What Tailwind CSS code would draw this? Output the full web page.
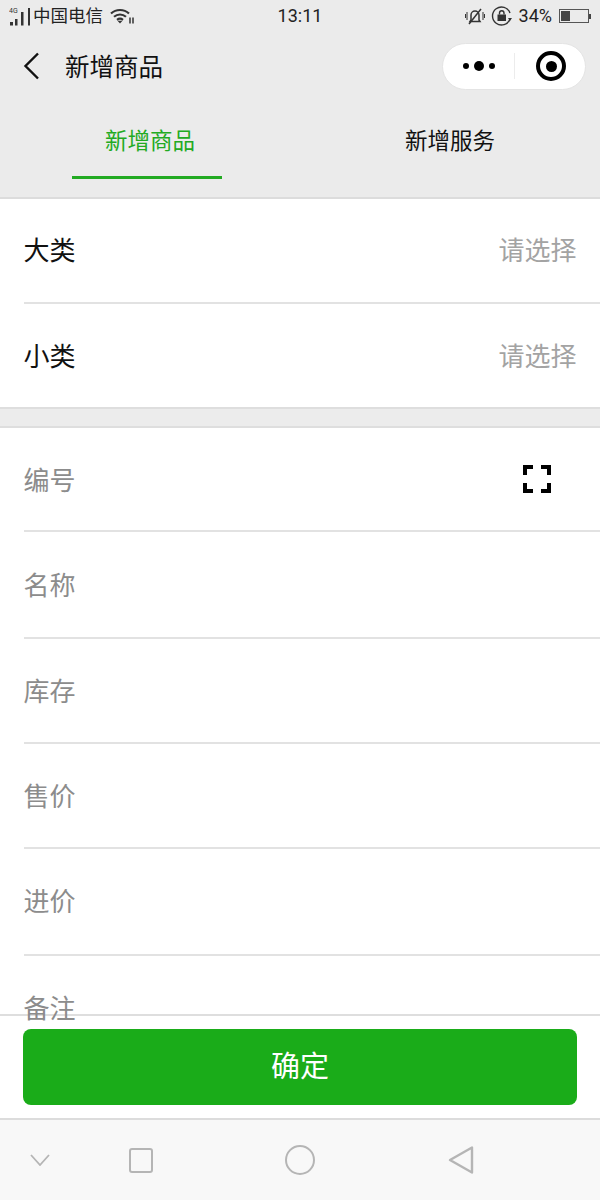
<!DOCTYPE html>
<html lang="zh-CN">
<head>
    <meta charset="UTF-8">
    <meta name="viewport" content="width=device-width, initial-scale=1.0">
    <title>新增商品</title>
    <script src="https://cdn.jsdelivr.net/npm/@tailwindcss/browser@4"></script>
</head>
<body class="w-[600px] h-[1200px] overflow-hidden bg-white font-['Roboto','Noto_Sans_CJK_SC',sans-serif]">
    <div class="flex flex-col h-[1200px]">
        <!-- Header -->
        <div class="bg-[#ebebeb] h-[199px] shrink-0 border-b-2 border-[#dcdcdc]">
            <!-- Status bar -->
            <div class="h-[32px] flex items-center justify-between pl-[9px] pr-[9px] text-[#222]">
                <div class="flex items-center w-[200px]">
                    <svg class="w-[23px] h-[20px] shrink-0" viewBox="0 0 23 20">
                        <text x="0" y="7" font-size="7" font-family="Roboto" fill="#333">4G</text>
                        <rect x="1" y="16" width="3" height="3.500" fill="#333"/>
                        <rect x="6" y="13" width="2.500" height="6.500" fill="#333"/>
                        <rect x="12" y="6" width="2.500" height="13.500" fill="#333"/>
                        <rect x="19" y="2" width="2" height="17.500" fill="#333"/>
                    </svg>
                    <span class="text-[17.500px] ml-[1px] pt-[2px] leading-none">中国电信</span>
                    <svg class="ml-[7px] w-[24px] h-[16px] mt-[-1px]" viewBox="0 0 24 16" fill="none" stroke="#333" stroke-width="2.200">
                        <path d="M1 5.500C6 0.800 14 0.800 19 5.500"/>
                        <path d="M4 8.800C7.500 5.700 12.500 5.700 16 8.800"/>
                        <path d="M7 11.800C8.800 10.500 11.200 10.500 13 11.800"/>
                        <path d="M10 15.500L7.500 12.800H12.500Z" fill="#333" stroke="none"/>
                        <path d="M20 9.500v6M23 9.500v6" stroke-width="1.500"/>
                    </svg>
                </div>
                <span class="text-[18px] leading-none">13:11</span>
                <div class="flex items-center justify-end w-[200px]">
                    <svg class="w-[20px] h-[18px]" viewBox="0 0 20 18" fill="none" stroke="#333" stroke-width="1.500">
                        <path d="M6 13V8a4 4 0 0 1 8 0v5l1 1.500H5Z"/>
                        <path d="M16 2L4 17"/>
                        <path d="M2 5v8M0.500 7v4M18 5v8M19.500 7v4" stroke-width="1"/>
                    </svg>
                    <svg class="ml-[6px] w-[22px] h-[22px]" viewBox="0 0 22 22" fill="none" stroke="#333" stroke-width="1.400">
                        <path d="M19 14A9 9 0 1 1 19 8"/>
                        <path d="M17 13h4l-2 3Z" fill="#333" stroke="none"/>
                        <rect x="6.500" y="9.500" width="8.500" height="6.500" fill="#333" stroke="none"/>
                        <path d="M8.500 9.500V8a2.200 2.200 0 0 1 4.500 0v1.500"/>
                    </svg>
                    <span class="text-[18px] leading-none ml-[6px] mr-[2px]">34%</span>
                    <div class="ml-[5px] flex items-center">
                        <div class="w-[30px] h-[14px] border border-[#555] p-px flex">
                            <div class="w-[9px] bg-[#444]"></div>
                        </div>
                        <div class="w-[2px] h-[5px] bg-[#444]"></div>
                    </div>
                </div>
            </div>
            <!-- Nav bar -->
            <div class="h-[68px] flex items-center justify-between pl-[23px] pr-[14px]">
                <div class="flex items-center">
                    <svg class="w-[16px] h-[28px]" viewBox="0 0 16 28" fill="none" stroke="#111" stroke-width="2.400">
                        <path d="M15 1.500L2.500 14L15 26.500"/>
                    </svg>
                    <span class="text-[24.500px] leading-none ml-[26px] mt-[4px] text-[#111]">新增商品</span>
                </div>
                <div class="w-[144px] h-[47px] rounded-full bg-white border border-[#e4e4e4] flex items-center">
                    <div class="w-[71px] flex items-center justify-center gap-[5px]">
                        <span class="w-[6px] h-[6px] rounded-full bg-black"></span>
                        <span class="w-[10px] h-[10px] rounded-full bg-black"></span>
                        <span class="w-[6px] h-[6px] rounded-full bg-black"></span>
                    </div>
                    <div class="w-px h-[26px] bg-[#ececec]"></div>
                    <div class="flex-1 flex items-center justify-center pl-[2px]">
                        <div class="w-[30px] h-[30px] rounded-full border-[4px] border-black flex items-center justify-center">
                            <div class="w-[11px] h-[11px] rounded-full bg-black"></div>
                        </div>
                    </div>
                </div>
            </div>
            <!-- Tabs -->
            <div class="flex h-[80px]">
                <div class="w-1/2 flex justify-center pr-[6px]">
                    <div class="w-[150px] h-[79px] flex items-center justify-center border-b-[3px] border-[#22aa22] text-[#22aa22] text-[22.500px] leading-none pt-[7px] pl-[6px]">新增商品</div>
                </div>
                <div class="w-1/2 flex justify-center">
                    <div class="w-[150px] h-[79px] flex items-center justify-center text-[#111] text-[22.500px] leading-none pt-[4px]">新增服务</div>
                </div>
            </div>
        </div>

        <!-- Category group -->
        <div class="pl-[23.500px] shrink-0">
            <div class="h-[105px] flex items-center justify-between border-b-2 border-[#e2e2e2] pr-[23.500px]">
                <span class="text-[26px] leading-none text-[#111]">大类</span>
                <span class="text-[26px] leading-none text-[#a3a3a3]">请选择</span>
            </div>
            <div class="h-[103px] flex items-center justify-between pr-[23.500px] pt-[2px]">
                <span class="text-[26px] leading-none text-[#111]">小类</span>
                <span class="text-[26px] leading-none text-[#a3a3a3]">请选择</span>
            </div>
        </div>

        <div class="h-[21px] shrink-0 bg-[#ececec] border-y-2 border-[#dedede]"></div>

        <!-- Fields group -->
        <div class="pl-[23.500px] shrink-0 text-[26px] leading-none text-[#8c8c8c]">
            <div class="h-[104px] flex items-center justify-between border-b-2 border-[#e2e2e2] pr-[49px]">
                <span class="mt-[4px]">编号</span>
                <svg class="w-[28px] h-[28px]" viewBox="0 0 28 28" fill="none" stroke="#000" stroke-width="4">
                    <path d="M2 10V2H10M18 2H26V10M26 18V26H18M10 26H2V18"/>
                </svg>
            </div>
            <div class="h-[107px] flex items-center border-b-2 border-[#e2e2e2] pt-[2px]"><span>名称</span></div>
            <div class="h-[105px] flex items-center border-b-2 border-[#e2e2e2] pt-[2px]"><span>库存</span></div>
            <div class="h-[105px] flex items-center border-b-2 border-[#e2e2e2] pt-[2px]"><span>售价</span></div>
            <div class="h-[107px] flex items-center border-b-2 border-[#e2e2e2]"><span>进价</span></div>
            <div class="h-[58px] relative z-10 pt-[40px]"><span>备注</span></div>
        </div>

        <!-- Confirm bar -->
        <div class="h-[104px] shrink-0 bg-white border-t-2 border-[#dedede] px-[23px] pt-[13px]">
            <div class="h-[76px] rounded-[8px] bg-[#1aac19] flex items-center justify-center text-white text-[29px] leading-none">确定</div>
        </div>

        <!-- Android nav bar -->
        <div class="flex-1 bg-[#f8f8f8] border-t-2 border-[#dcdcdc] flex items-center">
            <svg class="ml-[30px] w-[20px] h-[12px]" viewBox="0 0 20 12" fill="none" stroke="#b5b5b5" stroke-width="1.800">
                <path d="M1 1L10 11L19 1"/>
            </svg>
            <div class="ml-[79px] w-[24px] h-[25px] rounded-[3px] border-2 border-[#b5b5b5]"></div>
            <div class="ml-[132px] w-[30px] h-[30px] rounded-full border-2 border-[#b5b5b5]"></div>
            <svg class="ml-[133px] w-[26px] h-[30px]" viewBox="0 0 26 30" fill="none" stroke="#b5b5b5" stroke-width="2.400" stroke-linejoin="round">
                <path d="M2 15L24 2.500V27.500Z"/>
            </svg>
        </div>
    </div>
</body>
</html>
